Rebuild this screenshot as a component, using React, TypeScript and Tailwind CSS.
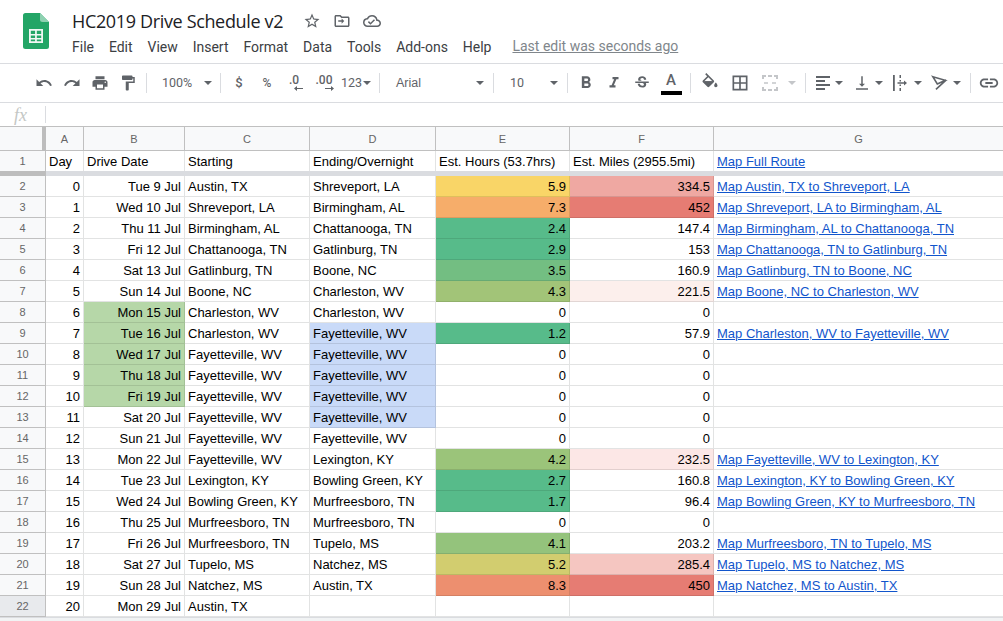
import * as React from "react";

const gridCols = "grid grid-cols-[46px_38px_101px_125px_126px_134px_144px_1fr]";
const arial = "font-['Liberation_Sans',Arial,sans-serif]";
const roboto = "font-['Roboto',sans-serif]";

type Row = {
  day: number;
  date: string;
  from: string;
  to?: string;
  hours?: string;
  miles?: string;
  link?: string;
  dateBg?: string;
  toBg?: string;
  hoursBg?: string;
  milesBg?: string;
};

const rows: Row[] = [
  { day: 0, date: "Tue 9 Jul", from: "Austin, TX", to: "Shreveport, LA", hours: "5.9", miles: "334.5", link: "Map Austin, TX to Shreveport, LA", hoursBg: "bg-[#f9d567]", milesBg: "bg-[#efa8a2]" },
  { day: 1, date: "Wed 10 Jul", from: "Shreveport, LA", to: "Birmingham, AL", hours: "7.3", miles: "452", link: "Map Shreveport, LA to Birmingham, AL", hoursBg: "bg-[#f6ad6a]", milesBg: "bg-[#e67c73]" },
  { day: 2, date: "Thu 11 Jul", from: "Birmingham, AL", to: "Chattanooga, TN", hours: "2.4", miles: "147.4", link: "Map Birmingham, AL to Chattanooga, TN", hoursBg: "bg-[#57bb8a]" },
  { day: 3, date: "Fri 12 Jul", from: "Chattanooga, TN", to: "Gatlinburg, TN", hours: "2.9", miles: "153", link: "Map Chattanooga, TN to Gatlinburg, TN", hoursBg: "bg-[#57bb8a]" },
  { day: 4, date: "Sat 13 Jul", from: "Gatlinburg, TN", to: "Boone, NC", hours: "3.5", miles: "160.9", link: "Map Gatlinburg, TN to Boone, NC", hoursBg: "bg-[#73be82]" },
  { day: 5, date: "Sun 14 Jul", from: "Boone, NC", to: "Charleston, WV", hours: "4.3", miles: "221.5", link: "Map Boone, NC to Charleston, WV", hoursBg: "bg-[#a2c478]", milesBg: "bg-[#fcefec]" },
  { day: 6, date: "Mon 15 Jul", from: "Charleston, WV", to: "Charleston, WV", hours: "0", miles: "0", dateBg: "bg-[#b6d7a8]" },
  { day: 7, date: "Tue 16 Jul", from: "Charleston, WV", to: "Fayetteville, WV", hours: "1.2", miles: "57.9", link: "Map Charleston, WV to Fayetteville, WV", dateBg: "bg-[#b6d7a8]", toBg: "bg-[#c9daf8]", hoursBg: "bg-[#57bb8a]" },
  { day: 8, date: "Wed 17 Jul", from: "Fayetteville, WV", to: "Fayetteville, WV", hours: "0", miles: "0", dateBg: "bg-[#b6d7a8]", toBg: "bg-[#c9daf8]" },
  { day: 9, date: "Thu 18 Jul", from: "Fayetteville, WV", to: "Fayetteville, WV", hours: "0", miles: "0", dateBg: "bg-[#b6d7a8]", toBg: "bg-[#c9daf8]" },
  { day: 10, date: "Fri 19 Jul", from: "Fayetteville, WV", to: "Fayetteville, WV", hours: "0", miles: "0", dateBg: "bg-[#b6d7a8]", toBg: "bg-[#c9daf8]" },
  { day: 11, date: "Sat 20 Jul", from: "Fayetteville, WV", to: "Fayetteville, WV", hours: "0", miles: "0", toBg: "bg-[#c9daf8]" },
  { day: 12, date: "Sun 21 Jul", from: "Fayetteville, WV", to: "Fayetteville, WV", hours: "0", miles: "0" },
  { day: 13, date: "Mon 22 Jul", from: "Fayetteville, WV", to: "Lexington, KY", hours: "4.2", miles: "232.5", link: "Map Fayetteville, WV to Lexington, KY", hoursBg: "bg-[#9bc47a]", milesBg: "bg-[#fce7e6]" },
  { day: 14, date: "Tue 23 Jul", from: "Lexington, KY", to: "Bowling Green, KY", hours: "2.7", miles: "160.8", link: "Map Lexington, KY to Bowling Green, KY", hoursBg: "bg-[#57bb8a]" },
  { day: 15, date: "Wed 24 Jul", from: "Bowling Green, KY", to: "Murfreesboro, TN", hours: "1.7", miles: "96.4", link: "Map Bowling Green, KY to Murfreesboro, TN", hoursBg: "bg-[#57bb8a]" },
  { day: 16, date: "Thu 25 Jul", from: "Murfreesboro, TN", to: "Murfreesboro, TN", hours: "0", miles: "0" },
  { day: 17, date: "Fri 26 Jul", from: "Murfreesboro, TN", to: "Tupelo, MS", hours: "4.1", miles: "203.2", link: "Map Murfreesboro, TN to Tupelo, MS", hoursBg: "bg-[#94c37c]" },
  { day: 18, date: "Sat 27 Jul", from: "Tupelo, MS", to: "Natchez, MS", hours: "5.2", miles: "285.4", link: "Map Tupelo, MS to Natchez, MS", hoursBg: "bg-[#d2cd6f]", milesBg: "bg-[#f5c6c1]" },
  { day: 19, date: "Sun 28 Jul", from: "Natchez, MS", to: "Austin, TX", hours: "8.3", miles: "450", link: "Map Natchez, MS to Austin, TX", hoursBg: "bg-[#ed8f6f]", milesBg: "bg-[#e67c73]" },
  { day: 20, date: "Mon 29 Jul", from: "Austin, TX" },
];

const Mi = ({ d, size = 18, className = "" }: { d: string; size?: number; className?: string }) => (
  <svg width={size} height={size} viewBox="0 0 24 24" fill="#5f6368" className={className}>
    <path d={d} />
  </svg>
);

const Caret = ({ light = false }: { light?: boolean }) => (
  <svg width="8" height="4" viewBox="0 0 8 4" className="shrink-0">
    <path d="M0 0h8L4 4z" fill={light ? "#c4c6c9" : "#5f6368"} />
  </svg>
);

const Sep = ({ ml }: { ml: string }) => <div className={`h-5 w-px shrink-0 bg-[#dadce0] ${ml}`} />;

const Tool = ({ children, w }: { children: React.ReactNode; w: string }) => (
  <div className={`flex h-7 shrink-0 items-center justify-center ${w}`}>{children}</div>
);

const Logo = () => (
  <svg width="26" height="36" viewBox="0 0 26 36">
    <path d="M2.5 0H17l9 9v24.5a2.5 2.5 0 0 1-2.5 2.5h-21A2.5 2.5 0 0 1 0 33.5v-31A2.5 2.5 0 0 1 2.5 0z" fill="#23a566" />
    <path d="M17 0l9 9h-6.500A2.500 2.500 0 0 1 17 6.500z" fill="#8ed1b1" />
    <path d="M6 16h14v14H6zm1.800 1.800V21h4.300v-3.200zm6 0V21h4.400v-3.200zm-6 4.800V25h4.300v-2.400zm6 0V25h4.400v-2.400zm-6 4V28.300h4.300v-1.700zm6 0V28.300h4.400v-1.700z" fill="#f1f8f4" fillRule="evenodd" />
  </svg>
);

const TitleIcons = () => (
  <div className="ml-[20px] flex items-center gap-[12px]">
    <Mi size={18} d="M22 9.240l-7.190-.620L12 2 9.190 8.630 2 9.240l5.460 4.730L5.820 21 12 17.270 18.180 21l-1.630-7.030L22 9.240zM12 15.400l-3.760 2.270 1-4.280-3.320-2.880 4.380-.380L12 6.100l1.710 4.040 4.380.380-3.320 2.880 1 4.280L12 15.400z" />
    <Mi size={18} d="M20 6h-8l-2-2H4c-1.100 0-2 .900-2 2v12c0 1.100.900 2 2 2h16c1.100 0 2-.900 2-2V8c0-1.100-.900-2-2-2zm0 12H4V6h5.170l2 2H20v10zm-8.500-2.500L15 12l-3.500-3.500v2.500H7v2h4.500v2.500z" />
    <Mi size={18} d="M19.350 10.040A7.490 7.490 0 0 0 12 4C9.110 4 6.600 5.640 5.350 8.040A5.994 5.994 0 0 0 0 14c0 3.310 2.690 6 6 6h13c2.760 0 5-2.240 5-5 0-2.640-2.050-4.780-4.650-4.960zM19 18H6c-2.210 0-4-1.790-4-4 0-2.050 1.530-3.760 3.560-3.970l1.070-.110.500-.950A5.469 5.469 0 0 1 12 6c2.620 0 4.880 1.860 5.390 4.430l.300 1.500 1.530.110A2.980 2.980 0 0 1 22 15c0 1.650-1.350 3-3 3zm-9-3.820l-2.090-2.090L6.500 13.500 10 17l6.010-6.010-1.410-1.410z" />
  </div>
);

const menus = ["File", "Edit", "View", "Insert", "Format", "Data", "Tools", "Add-ons", "Help"];

const TopBar = () => (
  <div className={`flex h-[64px] border-b border-[#dadce0] pl-[23px] pt-[13px] ${roboto}`}>
    <Logo />
    <div className="ml-[23px] flex flex-col">
      <div className="-mt-[2px] flex h-[20px] items-center">
        <span className="font-['Open_Sans',sans-serif] text-[18px] leading-[20px] tracking-[-0.35px] text-[#202124]">HC2019 Drive Schedule v2</span>
        <TitleIcons />
      </div>
      <div className="mt-[6px] flex items-center text-[14px] leading-[20px] text-[#3c4043]">
        <div className="flex gap-[14.9px]">
          {menus.map((m) => (
            <span key={m}>{m}</span>
          ))}
        </div>
        <span className="ml-[21px] -translate-y-px text-[#80868b] underline">Last edit was seconds ago</span>
      </div>
    </div>
  </div>
);

const Toolbar = () => (
  <div className={`flex h-[39px] items-center border-b border-[#dadce0] pl-[30px] text-[#5f6368] ${roboto}`}>
    <Tool w="w-[28px]"><Mi d="M12.500 8c-2.650 0-5.050.990-6.900 2.600L2 7v9h9l-3.620-3.620c1.390-1.160 3.160-1.880 5.120-1.880 3.540 0 6.550 2.310 7.600 5.500l2.370-.780C21.080 11.030 17.150 8 12.500 8z" /></Tool>
    <Tool w="w-[28px]"><Mi d="M18.400 10.600C16.550 8.990 14.150 8 11.500 8c-4.650 0-8.580 3.030-9.960 7.220L3.900 16c1.050-3.190 4.050-5.500 7.600-5.500 1.950 0 3.730.720 5.120 1.880L13 16h9V7l-3.600 3.600z" /></Tool>
    <Tool w="w-[28px]"><Mi d="M19 8H5c-1.660 0-3 1.340-3 3v6h4v4h12v-4h4v-6c0-1.660-1.340-3-3-3zm-3 11H8v-5h8v5zm3-7c-.550 0-1-.450-1-1s.450-1 1-1 1 .450 1 1-.450 1-1 1zm-1-9H6v4h12V3z" /></Tool>
    <Tool w="w-[28px]"><Mi d="M18 4V3c0-.550-.450-1-1-1H5c-.550 0-1 .450-1 1v4c0 .550.450 1 1 1h12c.550 0 1-.450 1-1V6h1v4H9v11c0 .550.450 1 1 1h2c.550 0 1-.450 1-1v-9h8V4h-3z" /></Tool>
    <Sep ml="ml-[4px]" />
    <div className="ml-[15px] flex w-[50px] shrink-0 items-center text-[12.5px]">
      <span className="w-[42px]">100%</span>
      <Caret />
    </div>
    <Sep ml="ml-[8px]" />
    <Tool w="ml-[4px] w-[28px]"><span className="text-[13px] font-medium">$</span></Tool>
    <Tool w="w-[28px]"><span className="text-[12px] font-medium">%</span></Tool>
    <Tool w="w-[26px]">
      <div className="flex flex-col items-center">
        <span className="text-[12px] font-medium leading-[11px]">.0</span>
        <svg width="9" height="5" viewBox="0 0 9 5" className="ml-[8px]"><path d="M0 2.500L3 0v2h6v1H3v2z" fill="#5f6368" /></svg>
      </div>
    </Tool>
    <Tool w="w-[34px]">
      <div className="flex flex-col items-center">
        <span className="text-[12px] font-medium leading-[11px]">.00</span>
        <svg width="9" height="5" viewBox="0 0 9 5" className="ml-[10px]"><path d="M9 2.500L6 0v2H0v1h6v2z" fill="#5f6368" /></svg>
      </div>
    </Tool>
    <div className="flex w-[31px] shrink-0 items-center gap-[1px] text-[12.5px]">
      <span>123</span>
      <Caret />
    </div>
    <Sep ml="ml-[7px]" />
    <div className={`ml-[16px] flex w-[88px] shrink-0 items-center justify-between text-[12.5px] ${arial}`}>
      <span>Arial</span>
      <Caret />
    </div>
    <Sep ml="ml-[9px]" />
    <div className="ml-[16px] flex w-[48px] shrink-0 items-center justify-between text-[12.5px]">
      <span>10</span>
      <Caret />
    </div>
    <Sep ml="ml-[9px]" />
    <Tool w="ml-[4px] w-[28px]"><Mi size={20} d="M15.600 10.790c.970-.670 1.650-1.770 1.650-2.790 0-2.260-1.750-4-4-4H7v14h7.040c2.090 0 3.710-1.700 3.710-3.790 0-1.520-.860-2.820-2.150-3.420zM10 6.500h3c.830 0 1.500.670 1.500 1.500s-.670 1.500-1.500 1.500h-3v-3zm3.500 9H10v-3h3.500c.830 0 1.500.670 1.500 1.500s-.670 1.500-1.500 1.500z" /></Tool>
    <Tool w="w-[28px]"><Mi size={18} d="M10 4v3h2.210l-3.420 8H6v3h8v-3h-2.210l3.420-8H18V4z" /></Tool>
    <Tool w="w-[28px]"><Mi size={18} d="M6.850 7.080C6.850 4.370 9.450 3 12.240 3c1.640 0 3 .490 3.900 1.280.770.650 1.460 1.730 1.460 3.240h-3.010c0-.310-.050-.590-.150-.850-.290-.860-1.200-1.280-2.250-1.280-1.860 0-2.340 1.020-2.340 1.700 0 .480.250.880.740 1.210.380.250.770.480 1.410.700H7.390c-.210-.340-.540-.890-.540-1.920zM21 12v-2H3v2h9.620c1.150.450 1.960.750 1.960 1.970 0 1-.810 1.670-2.280 1.670-1.540 0-2.930-.540-2.930-2.510H6.400c0 .550.080 1.130.240 1.580.810 2.290 3.290 3.300 5.670 3.300 2.270 0 5.300-.890 5.300-4.050 0-.300-.010-1.160-.480-1.940H21V12z" /></Tool>
    <div className="flex w-[30px] shrink-0 flex-col items-center">
      <span className="mt-[1px] text-[15px] font-medium leading-[17px]">A</span>
      <div className="mt-[2px] h-[4px] w-[21px] bg-black" />
    </div>
    <Sep ml="ml-[4px]" />
    <Tool w="ml-[5px] w-[28px]">
      <svg width="20" height="20" viewBox="0 0 24 24" fill="#5f6368">
        <path d="M16.560 8.940L7.620 0 6.210 1.410l2.380 2.380-5.150 5.150c-.590.590-.590 1.540 0 2.120l5.500 5.500c.290.290.680.440 1.060.440s.770-.150 1.060-.440l5.500-5.500c.590-.580.590-1.530 0-2.120zM5.210 10L10 5.210 14.790 10H5.210zM19 11.500s-2 2.170-2 3.500c0 1.100.900 2 2 2s2-.900 2-2c0-1.330-2-3.500-2-3.500z" />
        <path d="M5 10h10l-5 5z" />
      </svg>
    </Tool>
    <Tool w="ml-[2px] w-[28px]"><Mi size={20} d="M3 3v18h18V3H3zm8 16H5v-6h6v6zm0-8H5V5h6v6zm8 8h-6v-6h6v6zm0-8h-6V5h6v6z" /></Tool>
    <Tool w="ml-[2px] w-[28px]">
      <svg width="20" height="20" viewBox="0 0 20 20" fill="none" stroke="#c4c6c9" strokeWidth="2">
        <path d="M3 6V3h3M8 3h4M14 3h3v3M3 14v3h3M8 17h4M14 17h3v-3" />
        <path d="M4 10h4M16 10h-4" strokeWidth="1.500" />
      </svg>
    </Tool>
    <div className="ml-[4px] flex w-[12px] shrink-0 items-center"><Caret light /></div>
    <Sep ml="ml-[5px]" />
    <Tool w="ml-[5px] w-[24px]">
      <svg width="18" height="18" viewBox="0 0 18 18" fill="#5f6368">
        <path d="M2 2h14v2H2zM2 6h9v2H2zM2 10h14v2H2zM2 14h9v2H2z" />
      </svg>
    </Tool>
    <div className="flex w-[15px] shrink-0 items-center"><Caret /></div>
    <Tool w="w-[24px]"><Mi d="M16 13h-3V3h-2v10H8l4 4 4-4zM4 19v2h16v-2H4z" /></Tool>
    <div className="flex w-[14px] shrink-0 items-center pl-[1px]"><Caret /></div>
    <Tool w="w-[24px]">
      <svg width="18" height="18" viewBox="0 0 18 18" fill="#5f6368">
        <path d="M2 1h1.800v16H2zM8.500 1h1.500v3H8.500zM8.500 14h1.500v3H8.500zM8.500 6h1.500v1.500H8.500zM8.500 10.500h1.500V12H8.500zM6.500 8.300h6.500V6.500l3 2.500-3 2.500V9.800H6.500z" />
      </svg>
    </Tool>
    <div className="flex w-[16px] shrink-0 items-center pl-[2px]"><Caret /></div>
    <Tool w="w-[24px]">
      <svg width="18" height="18" viewBox="0 0 20 20" fill="none" stroke="#5f6368" strokeWidth="1.800">
        <path d="M2 3l14 4-9 4zM5.500 17L17 6.500" />
      </svg>
    </Tool>
    <div className="flex w-[18px] shrink-0 items-center pl-[1px]"><Caret /></div>
    <Sep ml="ml-[0px]" />
    <Tool w="ml-[4px] w-[28px]"><Mi size={22} d="M3.900 12c0-1.710 1.390-3.100 3.100-3.100h4V7H7c-2.760 0-5 2.240-5 5s2.240 5 5 5h4v-1.900H7c-1.710 0-3.100-1.390-3.100-3.100zM8 13h8v-2H8v2zm9-6h-4v1.900h4c1.710 0 3.100 1.390 3.100 3.100s-1.390 3.100-3.100 3.100h-4V17h4c2.760 0 5-2.240 5-5s-2.240-5-5-5z" /></Tool>
  </div>
);

const FormulaBar = () => (
  <div className="flex h-[24px] items-center border-b border-[#c0c0c0] pl-[14px]">
    <span className="w-[31px] font-['Liberation_Serif',serif] text-[18px] italic leading-[24px] text-[#c4c7c5]">fx</span>
    <div className="h-[17px] w-px bg-[#dadce0]" />
  </div>
);

const Cell = ({ children, className = "" }: { children?: React.ReactNode; className?: string }) => (
  <div className={`h-[21px] overflow-hidden whitespace-nowrap border-b border-r border-[#e2e3e3] px-[3px] leading-[22px] text-black ${className}`}>
    {children}
  </div>
);

// shaded cells get a slightly darker edge, same as Sheets
const shaded = (bg?: string) => (bg ? `${bg} border-black/10` : "");

const SheetLink = ({ text }: { text: string }) => <span className="text-[#1155cc] underline">{text}</span>;

const ColHeaders = () => (
  <div className={`${gridCols} h-[24px] border-b border-[#c0c0c0] bg-[#f8f9fa] text-[11px] leading-[24px] text-[#666]`}>
    <div className="border-r-[4px] border-[#bdbdbd]" />
    {["A", "B", "C", "D", "E", "F", "G"].map((c) => (
      <div key={c} className="border-r border-[#c0c0c0] text-center last:border-r-0">
        {c}
      </div>
    ))}
  </div>
);

const RowNum = ({ n, active = false }: { n: number; active?: boolean }) => (
  <div className={`h-[21px] border-b border-r border-[#c0c0c0] text-center text-[11px] leading-[21px] text-[#666] ${active ? "bg-[#e8eaed]" : "bg-[#f8f9fa]"}`}>
    {n}
  </div>
);

const Sheet = () => (
  <div className={`text-[13px] ${arial}`}>
    <ColHeaders />
    <div className={gridCols}>
      <div className="h-[20px] border-r border-[#c0c0c0] bg-[#f8f9fa] text-center text-[11px] leading-[21px] text-[#666]">1</div>
      {["Day", "Drive Date", "Starting", "Ending/Overnight", "Est. Hours (53.7hrs)", "Est. Miles (2955.5mi)"].map((h) => (
        <div key={h} className="h-[20px] overflow-hidden whitespace-nowrap border-r border-[#e2e3e3] px-[3px] leading-[22px] text-black">
          {h}
        </div>
      ))}
      <div className="h-[20px] px-[3px] leading-[22px]">
        <SheetLink text="Map Full Route" />
      </div>
    </div>
    <div className="flex h-[5px]">
      <div className="w-[46px] bg-[#bdbdbd]" />
      <div className="flex-1 bg-[#dadce0]" />
    </div>
    {rows.map((r, i) => (
      <div key={r.day} className={gridCols}>
        <RowNum n={i + 2} active={i === rows.length - 1} />
        <Cell className="text-right">{r.day}</Cell>
        <Cell className={`text-right ${shaded(r.dateBg)}`}>{r.date}</Cell>
        <Cell>{r.from}</Cell>
        <Cell className={shaded(r.toBg)}>{r.to}</Cell>
        <Cell className={`text-right ${shaded(r.hoursBg)}`}>{r.hours}</Cell>
        <Cell className={`text-right ${shaded(r.milesBg)}`}>{r.miles}</Cell>
        <Cell className="border-r-0">{r.link && <SheetLink text={r.link} />}</Cell>
      </div>
    ))}
  </div>
);

export default function App() {
  return (
    <div className="flex h-[621px] w-[1003px] flex-col overflow-hidden bg-white">
      <TopBar />
      <Toolbar />
      <FormulaBar />
      <Sheet />
      <div className="flex-1 border-t border-[#dadce0] bg-[#f1f3f4]" />
    </div>
  );
}
